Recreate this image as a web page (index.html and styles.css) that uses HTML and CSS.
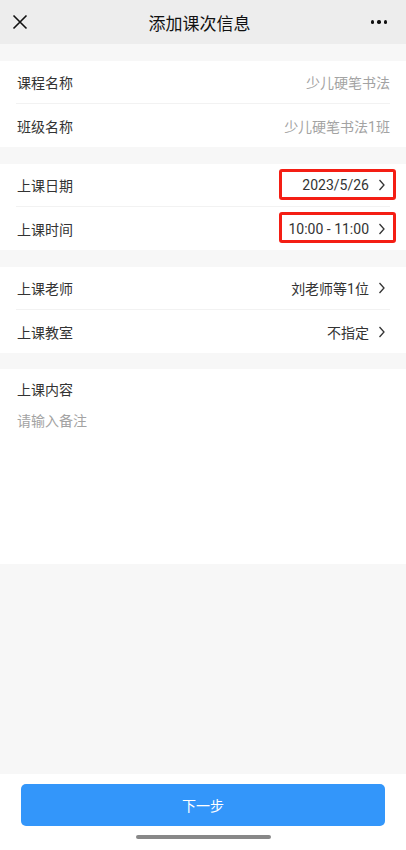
FILE: index.html
```
<!DOCTYPE html>
<html lang="zh-CN">
  <head>
    <meta charset="UTF-8" />
    <title>添加课次信息</title>
    <link rel="stylesheet" href="styles.css">
  </head>
  <body>
    <div class="topo">
      <svg class="fechar" width="16" height="16" viewBox="0 0 16 16">
        <path d="M1.5 1.5 L14.5 14.5 M14.5 1.5 L1.5 14.5" stroke="#111" stroke-width="1.6" fill="none" />
      </svg>
      <h1>添加课次信息</h1>
      <div class="mais"><span></span><span></span><span></span></div>
    </div>

    <div class="conteudo">
      <div class="grupo">
        <div class="linha">
          <span class="rotulo">课程名称</span>
          <span class="valor fraco">少儿硬笔书法</span>
        </div>
        <div class="linha">
          <span class="rotulo">班级名称</span>
          <span class="valor fraco">少儿硬笔书法1班</span>
        </div>
      </div>

      <div class="grupo">
        <div class="linha marcada">
          <span class="rotulo">上课日期</span>
          <span class="valor">2023/5/26</span>
          <svg class="seta" width="8" height="12" viewBox="0 0 8 12"><path d="M1.5 1 L6 6 L1.5 11" stroke="#333" stroke-width="1.3" fill="none" /></svg>
        </div>
        <div class="linha marcada">
          <span class="rotulo">上课时间</span>
          <span class="valor">10:00 - 11:00</span>
          <svg class="seta" width="8" height="12" viewBox="0 0 8 12"><path d="M1.5 1 L6 6 L1.5 11" stroke="#333" stroke-width="1.3" fill="none" /></svg>
        </div>
      </div>

      <div class="grupo">
        <div class="linha">
          <span class="rotulo">上课老师</span>
          <span class="valor">刘老师等1位</span>
          <svg class="seta" width="8" height="12" viewBox="0 0 8 12"><path d="M1.5 1 L6 6 L1.5 11" stroke="#333" stroke-width="1.3" fill="none" /></svg>
        </div>
        <div class="linha">
          <span class="rotulo">上课教室</span>
          <span class="valor">不指定</span>
          <svg class="seta" width="8" height="12" viewBox="0 0 8 12"><path d="M1.5 1 L6 6 L1.5 11" stroke="#333" stroke-width="1.3" fill="none" /></svg>
        </div>
      </div>

      <div class="grupo observacao">
        <label for="nota">上课内容</label>
        <textarea id="nota" placeholder="请输入备注"></textarea>
      </div>
    </div>

    <div class="rodape">
      <button type="button">下一步</button>
      <div class="indicador"></div>
    </div>
  </body>
</html>
```

FILE: styles.css
```
body {
  margin: 0;
  height: 850px;
  display: flex;
  flex-direction: column;
  background-color: #f7f7f7;
  color: #333;
  font-family: Roboto, "Noto Sans CJK SC", sans-serif;
  font-size: 14px;
}
.topo {
  height: 44px;
  flex-shrink: 0;
  display: flex;
  align-items: center;
  justify-content: space-between;
  padding: 0 19px 0 12px;
  background-color: #ededed;
}
.topo h1 {
  margin: 0;
  font-size: 17px;
  font-weight: normal;
  color: #111;
}
.fechar {
  display: block;
}
.mais {
  display: flex;
  gap: 3px;
  width: 16px;
}
.mais span {
  width: 3.5px;
  height: 3.5px;
  border-radius: 50%;
  background: #111;
}
.conteudo {
  flex: 1;
}
.grupo {
  margin-top: 17px;
  background: #fff;
}
.linha {
  position: relative;
  height: 43px;
  margin: 0 16px;
  display: flex;
  align-items: center;
  border-bottom: 1px solid #f2f2f2;
  box-sizing: border-box;
}
.linha:last-child {
  border-bottom: none;
}
.rotulo {
  flex: 1;
  padding-left: 1px;
}
.valor {
  color: #333;
}
.fraco {
  color: #a3a3a3;
}
.seta {
  margin-left: 9px;
  margin-right: 4px;
}
.marcada::after {
  content: "";
  position: absolute;
  top: 5px;
  right: -6px;
  width: 117px;
  height: 31px;
  border: 3px solid #f41e14;
  border-radius: 3px;
  box-sizing: border-box;
}
.observacao {
  margin-top: 16px;
  height: 195px;
  padding: 11px 17px;
  box-sizing: border-box;
  display: flex;
  flex-direction: column;
}
.observacao label {
  line-height: 20px;
}
.observacao textarea {
  flex: 1;
  margin-top: 11px;
  padding: 0;
  border: none;
  resize: none;
  outline: none;
  font: inherit;
  line-height: 20px;
  color: #333;
}
.observacao textarea::placeholder {
  color: #a3a3a3;
}
.rodape {
  height: 76px;
  flex-shrink: 0;
  background: #fff;
  padding: 10px 21px 0;
  box-sizing: border-box;
}
.rodape button {
  display: block;
  width: 100%;
  height: 42px;
  border: none;
  border-radius: 5px;
  background-color: #3396fa;
  color: #fff;
  font-family: inherit;
  font-size: 14px;
}
.indicador {
  width: 135px;
  height: 4px;
  margin: 9px auto 0;
  border-radius: 2px;
  background: #888;
}
```
